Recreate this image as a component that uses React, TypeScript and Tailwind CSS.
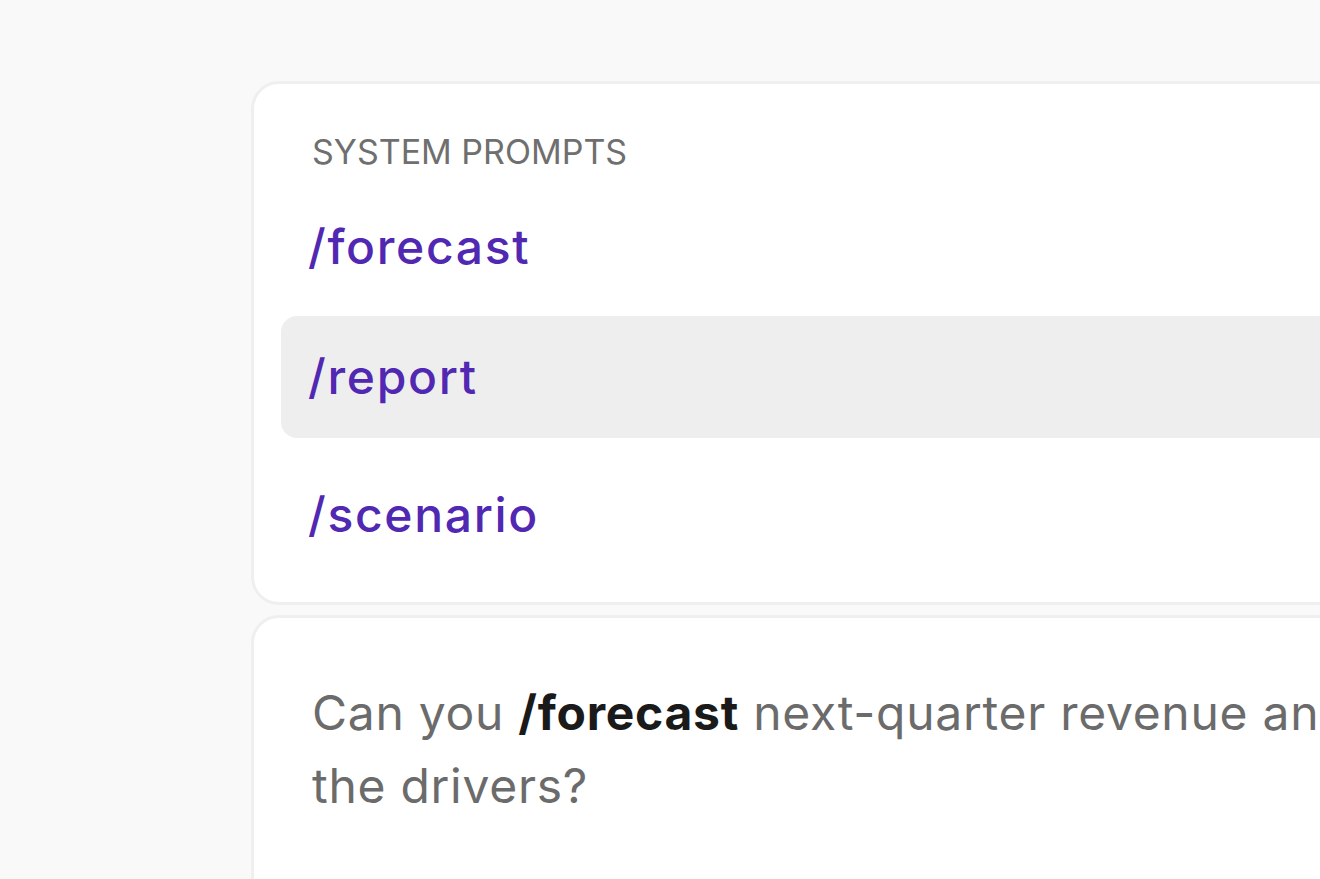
import React from "react";

export default function App() {
  const font = { fontFamily: "Inter, 'Noto Sans', sans-serif" };
  return (
    <div className="h-[879px] w-full overflow-hidden bg-[#f9f9f9]" style={font}>
      <div className="pl-[251px] pt-[81px]">
        <div className="w-[1300px] h-[524px] rounded-[28px] border-[3px] border-[#efefef] bg-white pt-[48px]">
          <div className="pl-[58px] text-[34px] leading-[40px] text-[#6f6f6f] whitespace-nowrap">
            SYSTEM PROMPTS
          </div>
          <div className="pl-[27px] mt-[14px]">
            <div className="h-[122px] flex items-center pl-[27px] rounded-[16px] text-[48px] font-medium tracking-[0.035em] text-[#5128b2] whitespace-nowrap">
              /forecast
            </div>
            <div className="mt-[8px] h-[122px] flex items-center pl-[27px] rounded-[16px] bg-[#eeeeee] text-[48px] font-medium tracking-[0.035em] text-[#5128b2] whitespace-nowrap">
              /report
            </div>
            <div className="mt-[16px] h-[122px] flex items-center pl-[27px] rounded-[16px] text-[48px] font-medium tracking-[0.035em] text-[#5128b2] whitespace-nowrap">
              /scenario
            </div>
          </div>
        </div>
        <div className="mt-[10px] w-[1300px] h-[400px] rounded-[28px] border-[3px] border-[#efefef] bg-white pl-[58px] pt-[58px]">
          <p className="text-[48px] leading-[73px] tracking-[0.015em] text-[#6b6b6b] whitespace-nowrap">
            Can you <span className="font-bold text-[#1a1a1a]">/forecast</span> next-quarter revenue and explain
            <br />
            the drivers?
          </p>
        </div>
      </div>
    </div>
  );
}
